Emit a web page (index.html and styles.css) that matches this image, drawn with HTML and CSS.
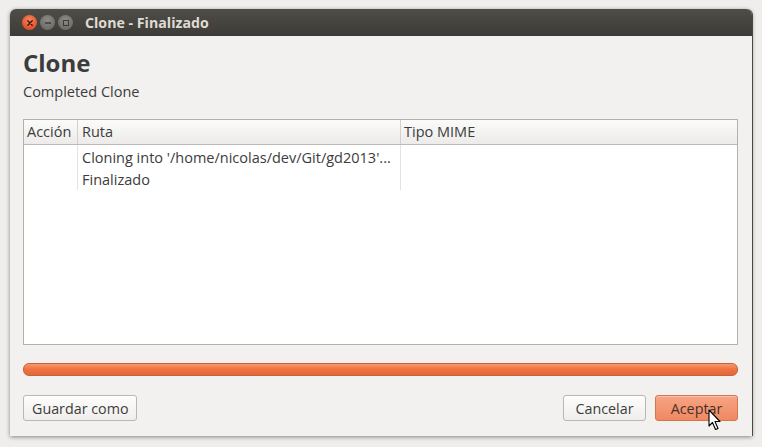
FILE: index.html
```html
<!DOCTYPE html>
<html lang="es">
<head>
<meta charset="utf-8">
<title>Clone - Finalizado</title>
<link rel="stylesheet" href="styles.css">
</head>
<body>
<div class="window">
  <div class="titlebar">
    <div class="wbtns">
      <span class="wbtn close"><svg width="14" height="14" viewBox="0 0 14 14"><path d="M4.8 4.8 L9.2 9.2 M9.2 4.8 L4.8 9.2" stroke="#3a1a10" stroke-width="1.4" stroke-linecap="round"/></svg></span>
      <span class="wbtn min"><svg width="14" height="14" viewBox="0 0 14 14"><path d="M4 7 H10" stroke="#3b3b38" stroke-width="1.5"/></svg></span>
      <span class="wbtn max"><svg width="14" height="14" viewBox="0 0 14 14"><rect x="4.5" y="4.5" width="5" height="5" fill="none" stroke="#3b3b38" stroke-width="1"/></svg></span>
    </div>
    <div class="title">Clone - Finalizado</div>
  </div>
  <div class="content">
    <h1 class="heading">Clone</h1>
    <p class="sub">Completed Clone</p>
    <div class="table">
      <div class="thead">
        <div class="th c1">Acción</div>
        <div class="th c2">Ruta</div>
        <div class="th c3">Tipo MIME</div>
      </div>
      <div class="tbody">
        <div class="col c1"></div>
        <div class="col c2">
          <div class="cell">Cloning into '/home/nicolas/dev/Git/gd2013'...</div>
          <div class="cell">Finalizado</div>
        </div>
        <div class="col c3 last"></div>
      </div>
    </div>
    <div class="progress"><div class="fill"></div></div>
    <div class="actions">
      <button class="btn">Guardar como</button>
      <div class="spacer"></div>
      <button class="btn w82">Cancelar</button>
      <button class="btn w82 primary">Aceptar
        <svg class="cursor" width="14" height="22" viewBox="0 0 14 22"><path d="M1 1 L1 17 L4.5 13.5 L7.5 20.5 L10 19.5 L7 12.5 L12 12.5 Z" fill="#fff" stroke="#000" stroke-width="1.1" stroke-linejoin="round"/></svg>
      </button>
    </div>
  </div>
</div>
</body>
</html>
```
FILE: styles.css
```css
html, body { margin: 0; padding: 0; }
body {
  background: #efeeec;
  font-family: "Open Sans", "DejaVu Sans", sans-serif;
  width: 762px;
  height: 447px;
  overflow: hidden;
}
.window {
  margin: 9px 0 0 10px;
  width: 742px;
  height: 427px;
  border-radius: 6px 6px 0 0;
  background: #f2f1f0;
  box-shadow: 0 1px 4px rgba(0,0,0,0.45), 1px 0 0 #5a5955;
  overflow: hidden;
  display: flex;
  flex-direction: column;
}
.titlebar {
  height: 27px;
  flex: none;
  background: linear-gradient(#4f4d48, #3c3b37);
  display: flex;
  align-items: center;
  padding-left: 12px;
}
.wbtns { display: flex; gap: 3px; }
.wbtn {
  width: 15px; height: 15px; border-radius: 50%;
  display: flex; align-items: center; justify-content: center;
}
.wbtn svg { display: block; }
.close { background: radial-gradient(circle at 50% 35%, #f9865d, #e0512a 70%); }
.min, .max { background: radial-gradient(circle at 50% 35%, #8c8b86, #6e6d69 70%); }
.title {
  margin-left: 12px;
  color: #dfdbd2;
  font-weight: 700;
  font-size: 14.2px;
}
.content {
  flex: 1;
  padding: 0 14px 0 13px;
  display: flex;
  flex-direction: column;
  color: #3c3c3c;
}
.heading {
  margin: 11px 0 0 0;
  font-size: 24px;
  font-weight: 700;
  line-height: 32px;
  color: #3c3c3c;
}
.sub {
  margin: 3px 0 0 0;
  font-size: 14.5px;
  line-height: 20px;
}
.table {
  margin-top: 17px;
  height: 224px;
  border: 1px solid #b3b1ad;
  background: #fff;
  display: flex;
  flex-direction: column;
  font-size: 14.5px;
}
.thead {
  display: flex;
  height: 24px;
  background: linear-gradient(#fbfbfa, #ecebea);
  border-bottom: 1px solid #bdbbb7;
}
.th {
  padding-left: 3px;
  line-height: 24px;
  border-right: 1px solid #d3d1cd;
  box-sizing: border-box;
}
.c1 { width: 54px; }
.c2 { width: 323px; padding-left: 4px; }
.c3 { flex: 1; border-right: none; }
.tbody { display: flex; height: 45px; }
.col { box-sizing: border-box; border-right: 1px solid #e4e3e1; }
.col.last { border-right: none; }
.cell { line-height: 22px; white-space: nowrap; }
.cell:first-child { margin-top: 2px; }
.progress {
  margin-top: 18px;
  height: 13px;
  border-radius: 6px;
  border: 1px solid #c9603a;
  box-sizing: border-box;
  background: linear-gradient(#f59a6e, #ef7442 45%, #e0693b);
}
.actions {
  margin-top: 19px;
  display: flex;
  align-items: center;
  gap: 9px;
}
.spacer { flex: 1; }
.btn {
  font-family: inherit;
  font-size: 14.3px;
  color: #3c3c3c;
  height: 26px;
  padding: 0 8px;
  border: 1px solid #b9b7b3;
  border-radius: 3px;
  background: linear-gradient(#fdfdfc, #efeeec);
  box-shadow: inset 0 1px 0 #fff;
  position: relative;
}
.w82 { width: 83px; }
.primary {
  border-color: #d27650;
  background: linear-gradient(#f6a584, #f08862);
  box-shadow: inset 0 1px 0 #f9c2ac;
  color: #4a3128;
}
.cursor { position: absolute; left: 52px; top: 13px; }
```
